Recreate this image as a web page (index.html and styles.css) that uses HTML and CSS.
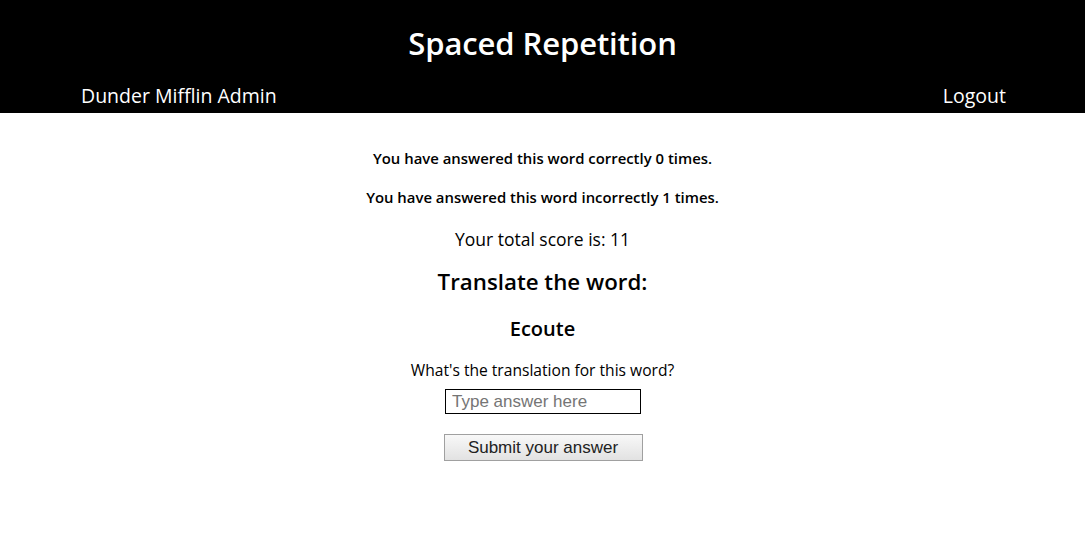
FILE: index.html
```html
<!DOCTYPE html>
<html>
<head>
<meta charset="utf-8">
<link rel="stylesheet" href="styles.css">
</head>
<body>
<header class="site-header">
  <h1 class="site-title">Spaced Repetition</h1>
  <nav class="site-nav">
    <span class="user-name">Dunder Mifflin Admin</span>
    <a class="logout" href="#">Logout</a>
  </nav>
</header>
<main class="learn">
  <p class="count">You have answered this word correctly 0 times.</p>
  <p class="count">You have answered this word incorrectly 1 times.</p>
  <p class="score">Your total score is: 11</p>
  <h2 class="prompt">Translate the word:</h2>
  <h3 class="word">Ecoute</h3>
  <form class="answer-form">
    <label class="answer-label" for="answer">What's the translation for this word?</label>
    <input class="answer-input" id="answer" type="text" placeholder="Type answer here">
    <button class="submit" type="button">Submit your answer</button>
  </form>
</main>
</body>
</html>
```

FILE: styles.css
```css
html, body {
  margin: 0;
  padding: 0;
  background: #fff;
}
body {
  font-family: "Open Sans", "Noto Sans", sans-serif;
  color: #000;
}
.site-header {
  background: #000;
  color: #fff;
  height: 113px;
  display: flex;
  flex-direction: column;
  align-items: center;
}
.site-title {
  margin: 23px 0 0;
  font-size: 31px;
  line-height: 40px;
  font-weight: 600;
  letter-spacing: -0.1px;
}
.site-nav {
  margin-top: 22px;
  width: 100%;
  box-sizing: border-box;
  padding: 0 79px 0 81px;
  display: flex;
  justify-content: space-between;
  font-size: 19.5px;
  line-height: 22px;
}
.logout {
  color: #fff;
  text-decoration: none;
}
.learn {
  display: flex;
  flex-direction: column;
  align-items: center;
  padding-top: 37px;
}
.count {
  margin: 0 0 22px;
  font-size: 14.9px;
  line-height: 17px;
  font-weight: 600;
}
.count + .count {
  margin-bottom: 23px;
}
.score {
  margin: 0;
  font-size: 17.5px;
  line-height: 20px;
}
.prompt {
  margin: 20px 0 0;
  font-size: 22.3px;
  line-height: 26px;
  font-weight: 600;
}
.word {
  margin: 22px 0 0;
  font-size: 20px;
  line-height: 24px;
  font-weight: 600;
}
.answer-form {
  display: flex;
  flex-direction: column;
  align-items: center;
}
.answer-label {
  margin-top: 19px;
  font-size: 15.6px;
  line-height: 20px;
}
.answer-input {
  margin-top: 9px;
  margin-left: 1px;
  width: 196px;
  height: 25px;
  box-sizing: border-box;
  border: 1.5px solid #000;
  padding: 0 6px;
  font-family: "Liberation Sans", Arial, sans-serif;
  font-size: 17px;
  color: #000;
}
.answer-input::placeholder {
  color: #757575;
}
.submit {
  margin-top: 20px;
  margin-left: 1px;
  width: 199px;
  height: 27px;
  box-sizing: border-box;
  border: 1px solid #a0a0a0;
  background: linear-gradient(#f8f8f8, #e2e2e2);
  font-family: "Liberation Sans", Arial, sans-serif;
  font-size: 17px;
  color: #222;
  padding: 0;
}
```
